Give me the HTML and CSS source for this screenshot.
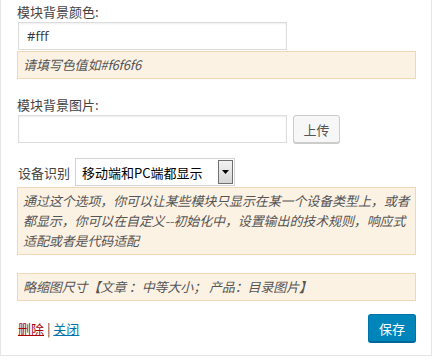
FILE: index.html
```html
<!DOCTYPE html>
<html lang="zh-CN">
<head>
  <meta charset="UTF-8">
  <title>模块设置</title>
  <link rel="stylesheet" href="styles.css">
</head>
<body>
  <div class="widget-inside">
    <div class="field">
      <label class="field-label">模块背景颜色:</label>
      <input class="text-input" type="text" value="#fff">
      <p class="desc">请填写色值如#f6f6f6</p>
    </div>

    <div class="field field-image">
      <label class="field-label">模块背景图片:</label>
      <div class="upload-row">
        <input class="text-input" type="text" value="">
        <button class="btn">上传</button>
      </div>
    </div>

    <div class="field field-device">
      <div class="device-row">
        <span class="device-label">设备识别</span>
        <div class="select-box">
          <span class="select-value">移动端和PC端都显示</span>
          <span class="select-arrow">
            <svg width="7" height="4" viewBox="0 0 7 4"><path d="M0 0H7L3.5 4Z" fill="#000"/></svg>
          </span>
        </div>
      </div>
      <p class="desc">通过这个选项，你可以让某些模块只显示在某一个设备类型上，或者都显示，你可以在自定义--初始化中，设置输出的技术规则，响应式适配或者是代码适配</p>
    </div>

    <p class="desc desc-size">略缩图尺寸【文章 ：中等大小； 产品：目录图片】</p>

    <div class="actions">
      <div class="links">
        <a class="link-delete" href="#">删除</a> | <a class="link-close" href="#">关闭</a>
      </div>
      <button class="btn-primary">保存</button>
    </div>
  </div>
</body>
</html>
```

FILE: styles.css
```css
body {
  margin: 0;
  background: #fff;
  font-family: "Noto Sans CJK SC", "Open Sans", sans-serif;
  font-size: 13px;
  color: #444;
}

.widget-inside {
  width: 432px;
  box-sizing: border-box;
  border: 1px solid #e5e5e5;
  border-top: none;
  padding: 0 15px 0 16px;
  height: 356px;
}

.field-label {
  display: block;
  line-height: 18px;
  padding-top: 3px;
  margin-bottom: 1px;
}

.text-input {
  display: block;
  box-sizing: border-box;
  width: 269px;
  height: 28px;
  margin: 0 0 0 1px;
  padding: 0 8px;
  border: 1px solid #ddd;
  box-shadow: inset 0 1px 2px rgba(0, 0, 0, 0.07);
  font-family: "Open Sans", "Noto Sans CJK SC", sans-serif;
  font-size: 13px;
  color: #32373c;
  background: #fff;
}

.desc {
  margin: 1px 0 0;
  padding: 3px 5px;
  background: #fcf2e4;
  border: 1px solid #efd7b9;
  font-style: italic;
  font-size: 13px;
  line-height: 20px;
  letter-spacing: -0.12px;
  color: #555;
}

.field-image {
  margin-top: 14px;
}

.upload-row {
  display: flex;
  gap: 6px;
}

.btn {
  box-sizing: border-box;
  height: 28px;
  width: 47px;
  padding: 0;
  border: 1px solid #ccc;
  border-radius: 3px;
  background: #f7f7f7;
  box-shadow: 0 1px 0 #ccc;
  font-family: "Noto Sans CJK SC", sans-serif;
  font-size: 13px;
  color: #555;
}

.field-device {
  margin-top: 15px;
}

.device-row {
  display: flex;
  align-items: center;
  gap: 5px;
  padding-left: 1px;
}

.device-label {
  color: #444;
}

.select-box {
  box-sizing: border-box;
  width: 160px;
  height: 28px;
  display: flex;
  align-items: center;
  justify-content: space-between;
  border: 1px solid #d4d4d4;
  background: #fff;
  padding: 0 1px 0 6px;
}

.select-value {
  color: #000;
  font-size: 13px;
}

.select-arrow {
  box-sizing: border-box;
  width: 15px;
  height: 24px;
  display: flex;
  align-items: center;
  justify-content: center;
  border: 1px solid #707070;
  background: linear-gradient(#f2f2f2, #d6d6d6);
}

.desc-size {
  margin-top: 18px;
}

.actions {
  display: flex;
  justify-content: space-between;
  align-items: center;
  margin-top: 13px;
  padding-left: 1px;
}

.links {
  color: #444;
}

.link-delete {
  color: #a00;
}

.link-close {
  color: #0073aa;
}

.btn-primary {
  box-sizing: border-box;
  width: 48px;
  height: 28px;
  padding: 0;
  border: 1px solid #0073aa;
  border-bottom-color: #006799;
  border-radius: 3px;
  background: #0085ba;
  box-shadow: 0 1px 0 #006799;
  color: #fff;
  font-family: "Noto Sans CJK SC", sans-serif;
  font-size: 13px;
}
```
